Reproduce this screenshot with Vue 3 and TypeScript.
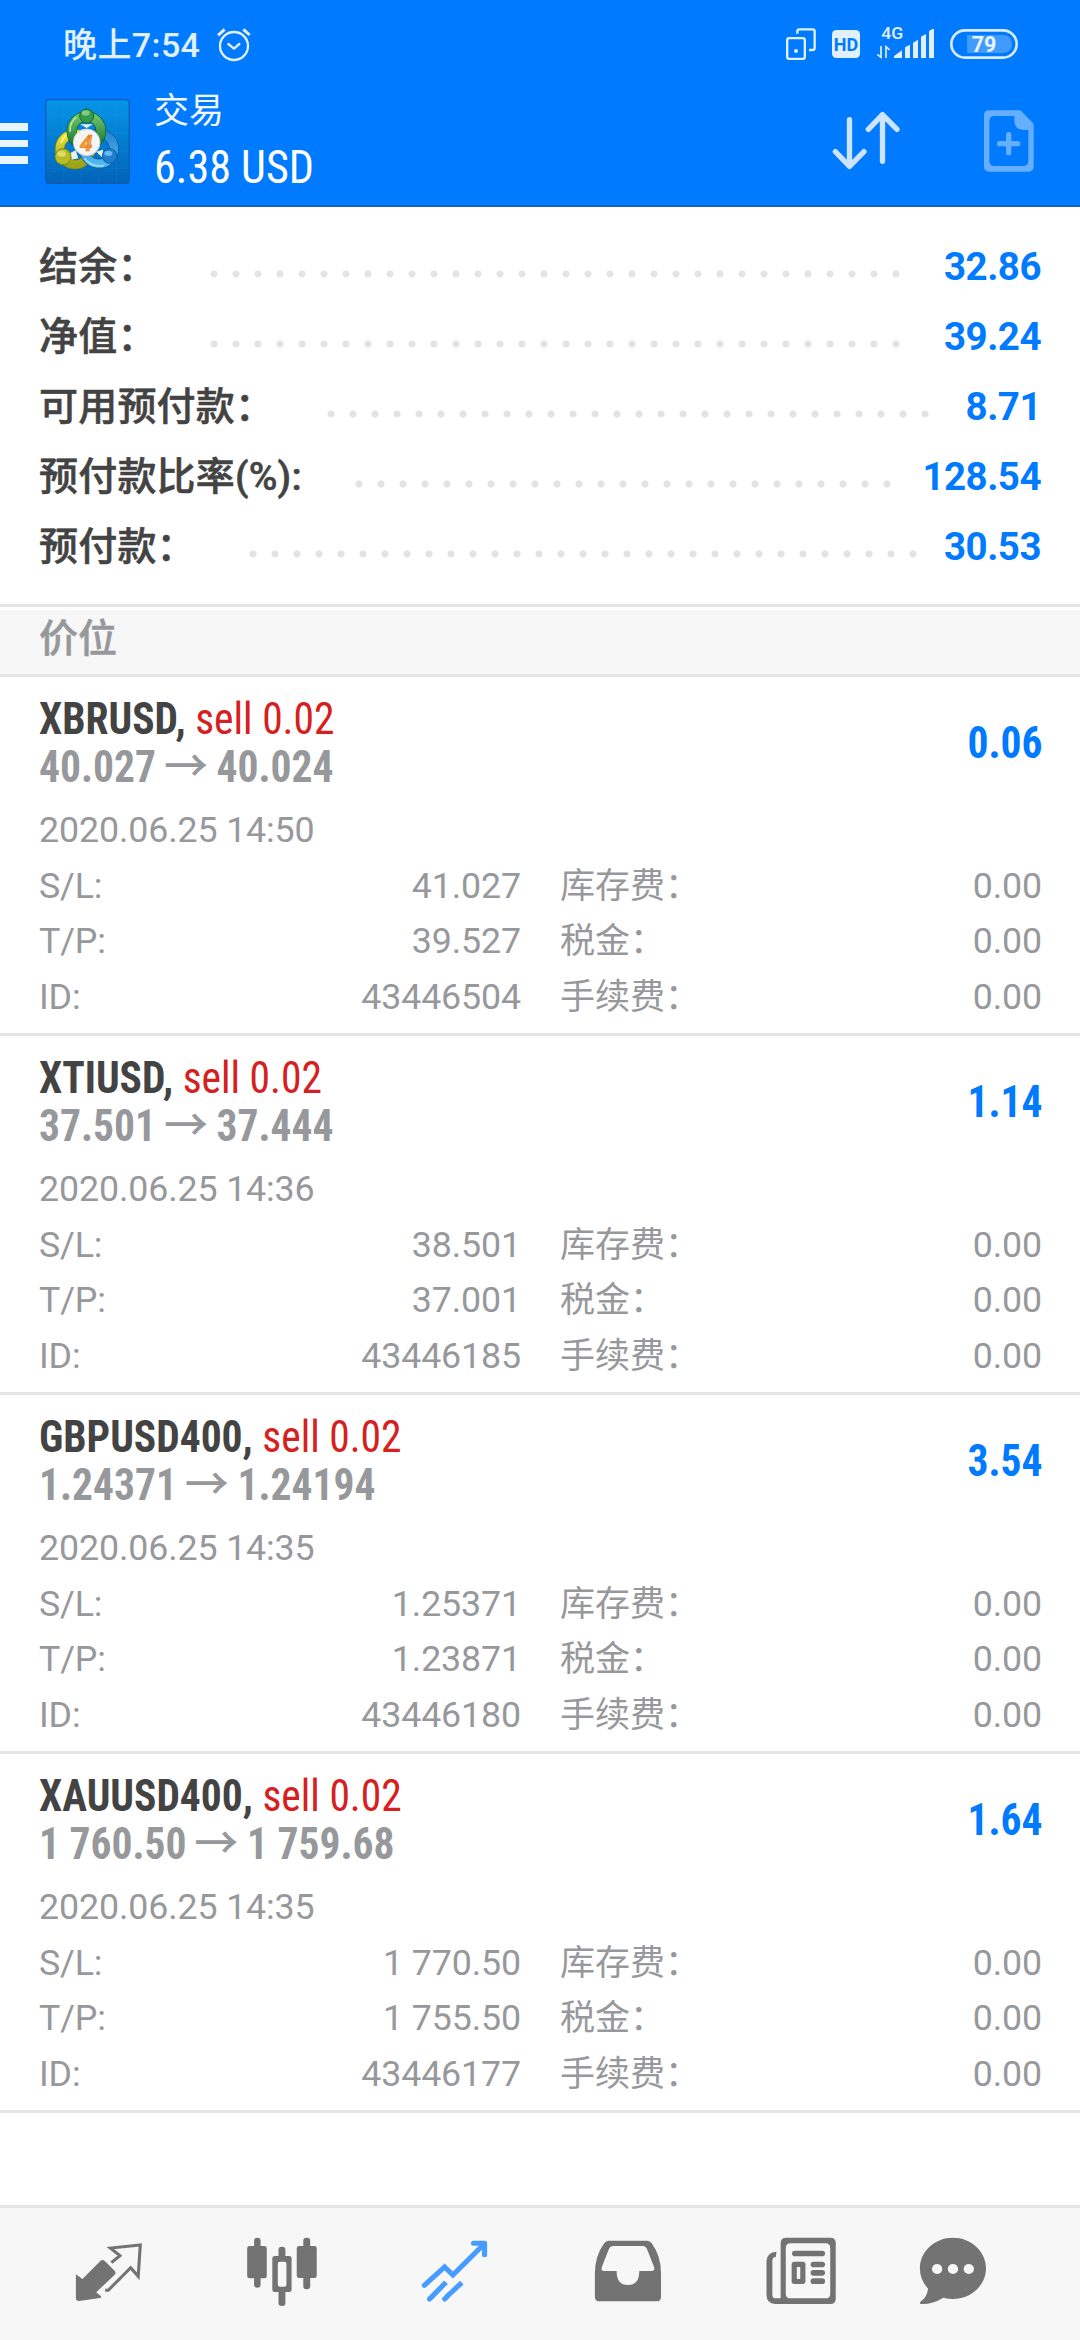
<script setup lang="ts">
interface SummaryRow {
  label: string
  value: string
  dots: number
}

interface Position {
  symbol: string
  side: string
  open: string
  current: string
  profit: string
  time: string
  sl: string
  tp: string
  id: string
}

const DOT_STEP = 22

const summary: SummaryRow[] = [
  { label: '结余：', value: '32.86', dots: 32 },
  { label: '净值：', value: '39.24', dots: 32 },
  { label: '可用预付款：', value: '8.71', dots: 28 },
  { label: '预付款比率(%):', value: '128.54', dots: 25 },
  { label: '预付款：', value: '30.53', dots: 31 },
]

const positions: Position[] = [
  { symbol: 'XBRUSD', side: 'sell 0.02', open: '40.027', current: '40.024', profit: '0.06', time: '2020.06.25 14:50', sl: '41.027', tp: '39.527', id: '43446504' },
  { symbol: 'XTIUSD', side: 'sell 0.02', open: '37.501', current: '37.444', profit: '1.14', time: '2020.06.25 14:36', sl: '38.501', tp: '37.001', id: '43446185' },
  { symbol: 'GBPUSD400', side: 'sell 0.02', open: '1.24371', current: '1.24194', profit: '3.54', time: '2020.06.25 14:35', sl: '1.25371', tp: '1.23871', id: '43446180' },
  { symbol: 'XAUUSD400', side: 'sell 0.02', open: '1 760.50', current: '1 759.68', profit: '1.64', time: '2020.06.25 14:35', sl: '1 770.50', tp: '1 755.50', id: '43446177' },
]

const details = (p: Position) => [
  { name: 'S/L:', value: p.sl, fee: '库存费：' },
  { name: 'T/P:', value: p.tp, fee: '税金：' },
  { name: 'ID:', value: p.id, fee: '手续费：' },
]
</script>

<template>
  <div class="screen">
    <header class="header">
      <div class="status">
        <span class="clock">晚上7:54</span>
        <svg class="alarm" width="36" height="36" viewBox="0 0 108 108" fill="none" stroke="#e0f0ff" stroke-width="7" stroke-linecap="round" stroke-linejoin="round">
          <circle cx="54" cy="60" r="42" />
          <path d="M37 54 L54 68 L70 54" />
          <path d="M6 28 L26 10 M82 10 L101 27" stroke-width="9" stroke-linecap="butt" />
        </svg>
        <svg class="indicators" width="236" height="36" viewBox="132 78 708 108" fill="none">
          <path d="M169 101 V94 Q169 88 175 88 H215 Q221 88 221 94 V144 Q221 150 215 150 H204" stroke="#e0f0ff" stroke-width="7" />
          <rect x="138.500" y="114.500" width="53" height="62" rx="6" stroke="#e0f0ff" stroke-width="7" />
          <circle cx="165" cy="153" r="6" fill="#e0f0ff" />
          <rect x="273" y="90" width="84" height="84" rx="13" fill="#e0f0ff" />
          <text x="315" y="152" class="hd" text-anchor="middle">HD</text>
          <text x="421" y="117" class="net" textLength="66" lengthAdjust="spacingAndGlyphs">4G</text>
          <path d="M420 138 V172 L409 163 M435 174 V140 L446 150" stroke="#e0f0ff" stroke-width="5" />
          <path fill="#e0f0ff" d="M459 168 L483 151 V174 H459Z M492 142 L507 134 V174 H492Z M516 128 L531 119 V174 H516Z M540 110 L555 102 V174 H540Z M564 94 Q572 86 579 87 V174 H564Z" />
          <rect x="631" y="91" width="196" height="82" rx="41" stroke="#d8ecff" stroke-width="8" />
          <path fill="#409bff" d="M678 105 H787 Q813 107 813 132 Q813 157 787 159 H678Z" />
          <text x="729" y="157" class="charge" text-anchor="middle" textLength="74" lengthAdjust="spacingAndGlyphs">79</text>
        </svg>
      </div>
      <div class="bar">
        <div class="menu"><i></i><i></i><i></i></div>
        <svg class="logo" width="85" height="85" viewBox="18 26 255 255">
          <defs>
            <linearGradient id="tile" x1="0" y1="0" x2="0" y2="1">
              <stop offset="0" stop-color="#0595e8" /><stop offset="1" stop-color="#0263b8" />
            </linearGradient>
            <linearGradient id="green" x1="0" y1="0" x2="0" y2="1">
              <stop offset="0" stop-color="#6cc26b" /><stop offset="1" stop-color="#16772f" />
            </linearGradient>
            <linearGradient id="yellow" x1="0" y1="0" x2="0" y2="1">
              <stop offset="0" stop-color="#f0e23a" /><stop offset="1" stop-color="#99a417" />
            </linearGradient>
            <linearGradient id="blue" x1="0" y1="0" x2="0" y2="1">
              <stop offset="0" stop-color="#2a86d2" /><stop offset="1" stop-color="#52b7f0" />
            </linearGradient>
          </defs>
          <rect x="20" y="28" width="251" height="251" rx="10" fill="url(#tile)" stroke="#0a5cb8" stroke-width="4" />
          <path d="M72 30 V277 M126 30 V277 M180 30 V277 M232 30 V277 M22 76 H269 M22 128 H269 M22 182 H269 M22 234 H269" stroke="#3aa6ee" stroke-opacity=".22" stroke-width="2" />
          <g fill="none">
            <circle cx="108" cy="177" r="46" stroke="#777f16" stroke-width="29" />
            <circle cx="108" cy="177" r="46" stroke="url(#yellow)" stroke-width="25" />
            <path d="M66 158 Q76 128 108 124" stroke="#fff789" stroke-width="5" />
            <circle cx="180" cy="175" r="45" stroke="#0a5899" stroke-width="29" />
            <circle cx="180" cy="175" r="45" stroke="url(#blue)" stroke-width="25" />
            <path d="M136 204 Q158 232 194 226" stroke="#a6dcff" stroke-width="5" />
            <circle cx="142" cy="122" r="44" stroke="#0c5b2b" stroke-width="31" />
            <circle cx="142" cy="122" r="44" stroke="url(#green)" stroke-width="27" />
            <path d="M93 124 Q92 94 112 81" stroke="#b7e5a4" stroke-width="5" />
          </g>
          <path d="M124 102 H162 L143 113Z M94 188 L110 180 L118 204 L98 208Z M172 184 L192 178 L192 204Z" fill="#e9f3e4" />
          <circle cx="143" cy="77" r="21" fill="#379b4d" stroke="#12682f" stroke-width="3" />
          <ellipse cx="140" cy="68" rx="12" ry="8" fill="#82cb80" />
          <circle cx="72" cy="199" r="24" fill="#b9bd25" stroke="#7d8618" stroke-width="3" />
          <ellipse cx="68" cy="190" rx="13" ry="9" fill="#dedb66" />
          <circle cx="212" cy="197" r="22" fill="#1f7fce" stroke="#0b5da8" stroke-width="3" />
          <ellipse cx="208" cy="189" rx="12" ry="8" fill="#68b8ee" />
          <circle cx="143" cy="156" r="40" fill="#f5f5f5" stroke="#cdd2d3" stroke-width="3" />
          <text x="142" y="181" class="four" text-anchor="middle">4</text>
        </svg>
        <div class="titles">
          <div class="caption">交易</div>
          <div class="total cond">6.38 USD</div>
        </div>
        <svg class="sort" width="70" height="62" viewBox="270 330 210 186" fill="none" stroke="#cce4ff" stroke-width="16" stroke-linecap="round" stroke-linejoin="round">
          <path d="M325.500 359 V499 M283 455 L325.500 499 L369 455" />
          <path d="M424.500 484 V344 M382 388 L424.500 344 L468 388" />
        </svg>
        <svg class="newdoc" width="52" height="62" viewBox="727 330 156 186">
          <path fill="#66afff" fill-rule="evenodd" d="M745 331 H839 L879 371 V499 Q879 515 864 515 H745 Q730 515 730 499 V346 Q730 331 745 331Z M762 348 Q746 348 746 364 V482 Q746 498 762 498 H847 Q863 498 863 482 V390 H849 Q821 389 821 361 V348Z" />
          <path d="M804 404 V458 M777 431 H831" stroke="#66afff" stroke-width="16" stroke-linecap="round" />
        </svg>
      </div>
    </header>

    <section class="summary">
      <div v-for="row in summary" :key="row.label" class="sumrow">
        <span class="label">{{ row.label }}</span>
        <span class="leader" :style="{ width: row.dots * DOT_STEP + 'px' }"></span>
        <span class="amount">{{ row.value }}</span>
      </div>
    </section>

    <div class="section">价位</div>

    <article v-for="p in positions" :key="p.id" class="position">
      <div class="top">
        <div>
          <div class="line cond"><b class="symbol">{{ p.symbol }},</b> <span class="side">{{ p.side }}</span></div>
          <div class="line cond prices">{{ p.open }} <span class="arrow">→</span> {{ p.current }}</div>
        </div>
        <div class="profit cond">{{ p.profit }}</div>
      </div>
      <div class="time">{{ p.time }}</div>
      <div v-for="d in details(p)" :key="d.name" class="detail">
        <span class="name">{{ d.name }}</span>
        <span class="val">{{ d.value }}</span>
        <span class="fee">{{ d.fee }}</span>
        <span class="feeval">0.00</span>
      </div>
    </article>

    <nav class="tabs">
      <div class="tab">
        <svg width="80" height="70" viewBox="199 141 232.300 210" preserveAspectRatio="none">
          <path fill="#737373" d="M219 253 L238 267 L290 213 Q297 207 303 213 L332 243 Q337 249 331 255 L278 307 L292 319 Q294 323 289 324 L228 333 Q219 333 219 325Z" />
          <path fill="none" stroke="#737373" stroke-width="9" d="M322 218 L347 197 L319 174 L406 165 L400 259 L378 233 L313 301 H304" />
        </svg>
      </div>
      <div class="tab">
        <svg width="80" height="70" viewBox="700 141 232.300 210" preserveAspectRatio="none">
          <g fill="#737373">
            <rect x="735" y="143" width="19" height="150" rx="9" /><rect x="715" y="168" width="57" height="97" rx="7" />
            <rect x="878" y="143" width="20" height="155" rx="9" /><rect x="859" y="168" width="58" height="96" rx="7" />
            <rect x="806" y="170" width="20" height="178" rx="9" /><rect x="788" y="198" width="56" height="108" rx="7" />
          </g>
          <rect x="804" y="215" width="25" height="75" rx="6" fill="#f7f7f7" />
        </svg>
      </div>
      <div class="tab">
        <svg width="80" height="70" viewBox="1203 141 232.300 210" preserveAspectRatio="none" fill="none" stroke="#469dff" stroke-width="15">
          <path stroke-linecap="round" d="M1230 286 L1289 231 L1313 255 L1404 162" />
          <path stroke-linecap="round" stroke-linejoin="round" d="M1373 160 H1405 V194" />
          <path d="M1293 277 L1251 321 M1339 278 L1294 321" />
          <path stroke-linecap="round" d="M1245 327 L1252 320 M1289 327 L1296 320" />
        </svg>
      </div>
      <div class="tab">
        <svg width="80" height="70" viewBox="138 141 232.300 210" preserveAspectRatio="none">
          <path fill="#737373" fill-rule="evenodd" d="M198 152 H310 Q318 152 323 160 Q350 198 350 250 V320 Q350 334 337 334 H172 Q158 334 158 320 V250 Q158 198 185 160 Q190 152 198 152Z M211 168 Q202 168 199 176 L178 232 Q175 243 187 243 H221 Q221 285 254 285 Q287 285 287 243 H322 Q333 243 330 232 L309 176 Q306 168 298 168Z" />
        </svg>
      </div>
      <div class="tab">
        <svg width="80" height="70" viewBox="641 141 232.300 210" preserveAspectRatio="none">
          <path fill="#737373" fill-rule="evenodd" d="M715 143 H842 Q858 143 858 159 V326 Q858 342 842 342 H682 Q657 340 657 314 V212 Q659 187 686 185 L684 201 Q674 201 674 212 V314 Q674 325 684 325 H698 V159 Q698 143 715 143Z M727 160 Q713 160 713 174 V311 Q713 325 727 325 H828 Q842 325 842 311 V174 Q842 160 828 160Z" />
          <g fill="#737373">
            <rect x="731" y="182" width="96" height="17" rx="8.500" /><rect x="730" y="215" width="40" height="67" rx="8" />
            <rect x="785" y="215" width="42" height="17" rx="8.500" /><rect x="785" y="240" width="42" height="17" rx="8.500" /><rect x="785" y="265" width="42" height="17" rx="8.500" />
          </g>
          <rect x="745" y="231" width="10" height="36" rx="2" fill="#f7f7f7" />
        </svg>
      </div>
      <div class="tab last">
        <svg width="80" height="70" viewBox="1083 141 232.300 210" preserveAspectRatio="none">
          <path fill="#737373" d="M1199 143 C1252 143 1295 184 1295 235 C1295 286 1252 327 1199 327 Q1184 327 1171 323 Q1140 343 1107 342 Q1100 340 1106 334 Q1123 322 1127 296 Q1103 270 1103 235 C1103 184 1146 143 1199 143Z" />
          <g fill="#f7f7f7"><circle cx="1153" cy="237" r="15" /><circle cx="1199" cy="237" r="15" /><circle cx="1245" cy="237" r="15" /></g>
        </svg>
      </div>
    </nav>
  </div>
</template>

<style>
body {
  background: #fff;
}
</style>

<style scoped>
.screen {
  width: 1080px;
  height: 2340px;
  display: flex;
  flex-direction: column;
  overflow: hidden;
  background: #fff;
  font-family: Roboto, "Noto Sans CJK SC", sans-serif;
  white-space: nowrap;
}
svg {
  display: block;
  flex: none;
  overflow: visible;
}
.cond {
  font-family: "Roboto Condensed", Roboto, "Noto Sans CJK SC", sans-serif;
  font-stretch: 75%;
  transform: scaleX(0.943);
  transform-origin: left center;
}
.header {
  box-sizing: border-box;
  height: 207px;
  background: #007aff;
  border-bottom: 2px solid #1464bd;
  color: #fff;
}
.status {
  height: 88px;
  display: flex;
  align-items: flex-start;
  padding-left: 63px;
}
.clock {
  width: 153px;
  margin-top: 25px;
  line-height: 40px;
  font-size: 34px;
  font-weight: 500;
  letter-spacing: 0.4px;
  color: #e0f0ff;
}
.alarm {
  margin-top: 26px;
}
.indicators {
  margin: 26px 0 0 533px;
}
.hd {
  font: 700 54px Roboto, sans-serif;
  fill: #007aff;
}
.net {
  font: 500 50px Roboto, sans-serif;
  fill: #e0f0ff;
}
.charge {
  font: 700 68px Roboto, sans-serif;
  fill: #e8f4ff;
}
.four {
  font: italic 700 68px Roboto, sans-serif;
  fill: #f7a13a;
  stroke: #e07a1c;
  stroke-width: 2px;
}
.bar {
  height: 117px;
  display: flex;
  align-items: flex-start;
}
.menu {
  width: 28px;
  margin-top: 35px;
  display: flex;
  flex-direction: column;
  gap: 9px;
}
.menu i {
  height: 7.500px;
  background: #e8f4ff;
}
.logo {
  margin: 11px 0 0 17px;
}
.titles {
  width: 300px;
  margin-left: 24px;
}
.caption {
  font-size: 35px;
  line-height: 48px;
  color: #f2f8ff;
}
.total {
  font-size: 47px;
  line-height: 60px;
  margin-top: 1px;
  transform: scaleX(0.939);
}
.sort {
  margin: 22px 0 0 377px;
}
.newdoc {
  margin: 22px 0 0 82px;
}
.summary {
  height: 350px;
  padding: 25px 39px 22px;
  border-bottom: 3px solid #e5e5e5;
}
.sumrow {
  height: 70px;
  display: flex;
  line-height: 70px;
  font-size: 39px;
}
.label {
  font-weight: 500;
  letter-spacing: 0.200px;
  color: #434343;
  -webkit-text-stroke: 0.5px #434343;
}
.leader {
  margin: 31px 0 0 46px;
  height: 22px;
  background: radial-gradient(circle at 11px 11px, #e3e3e3 3.200px, transparent 3.900px) 0 0 / 22px 22px repeat-x;
}
.amount {
  margin-left: auto;
  font-size: 38.500px;
  font-weight: 700;
  letter-spacing: -0.500px;
  color: #007aff;
}
.section {
  height: 58px;
  padding: 0 39px 6px;
  border-top: 3px solid #fff;
  border-bottom: 3px solid #e5e5e5;
  background: #f7f7f7;
  color: #97989b;
  font-size: 39px;
  font-weight: 500;
  line-height: 58px;
  -webkit-text-stroke: 0.5px #97989b;
}
.position {
  box-sizing: border-box;
  height: 359px;
  padding: 18px 38px 0 39px;
  border-bottom: 3px solid #e5e5e5;
  color: #97989b;
  font-size: 35.750px;
  letter-spacing: -0.120px;
}
.top {
  display: flex;
  justify-content: space-between;
  height: 107px;
  letter-spacing: 0;
}
.line {
  height: 48px;
  line-height: 48px;
  font-size: 44px;
}
.symbol {
  color: #434343;
}
.side {
  color: #d62020;
}
.prices {
  font-weight: 700;
}
.arrow {
  display: inline-block;
  font-family: "Noto Sans CJK SC", sans-serif;
  font-weight: 500;
  line-height: 1px;
  transform: scaleX(1.060);
}
.profit {
  margin-top: 24px;
  line-height: 48px;
  font-size: 44px;
  font-weight: 700;
  color: #007aff;
  transform-origin: right center;
}
.time {
  margin-bottom: 0.500px;
  line-height: 56px;
}
.detail {
  display: flex;
  height: 55.500px;
  line-height: 55.500px;
}
.name {
  width: 180px;
}
.val {
  width: 302px;
  text-align: right;
}
.fee {
  margin-left: 39px;
  font-size: 35px;
  letter-spacing: 0;
}
.feeval {
  margin-left: auto;
}
.tabs {
  display: flex;
  height: 132px;
  margin-top: auto;
  padding-left: 22px;
  border-top: 3px solid #e5e5e5;
  background: #f7f7f7;
}
.tab {
  width: 173px;
  display: flex;
  justify-content: center;
  padding-top: 29px;
}
.last {
  width: 132px;
}
</style>
